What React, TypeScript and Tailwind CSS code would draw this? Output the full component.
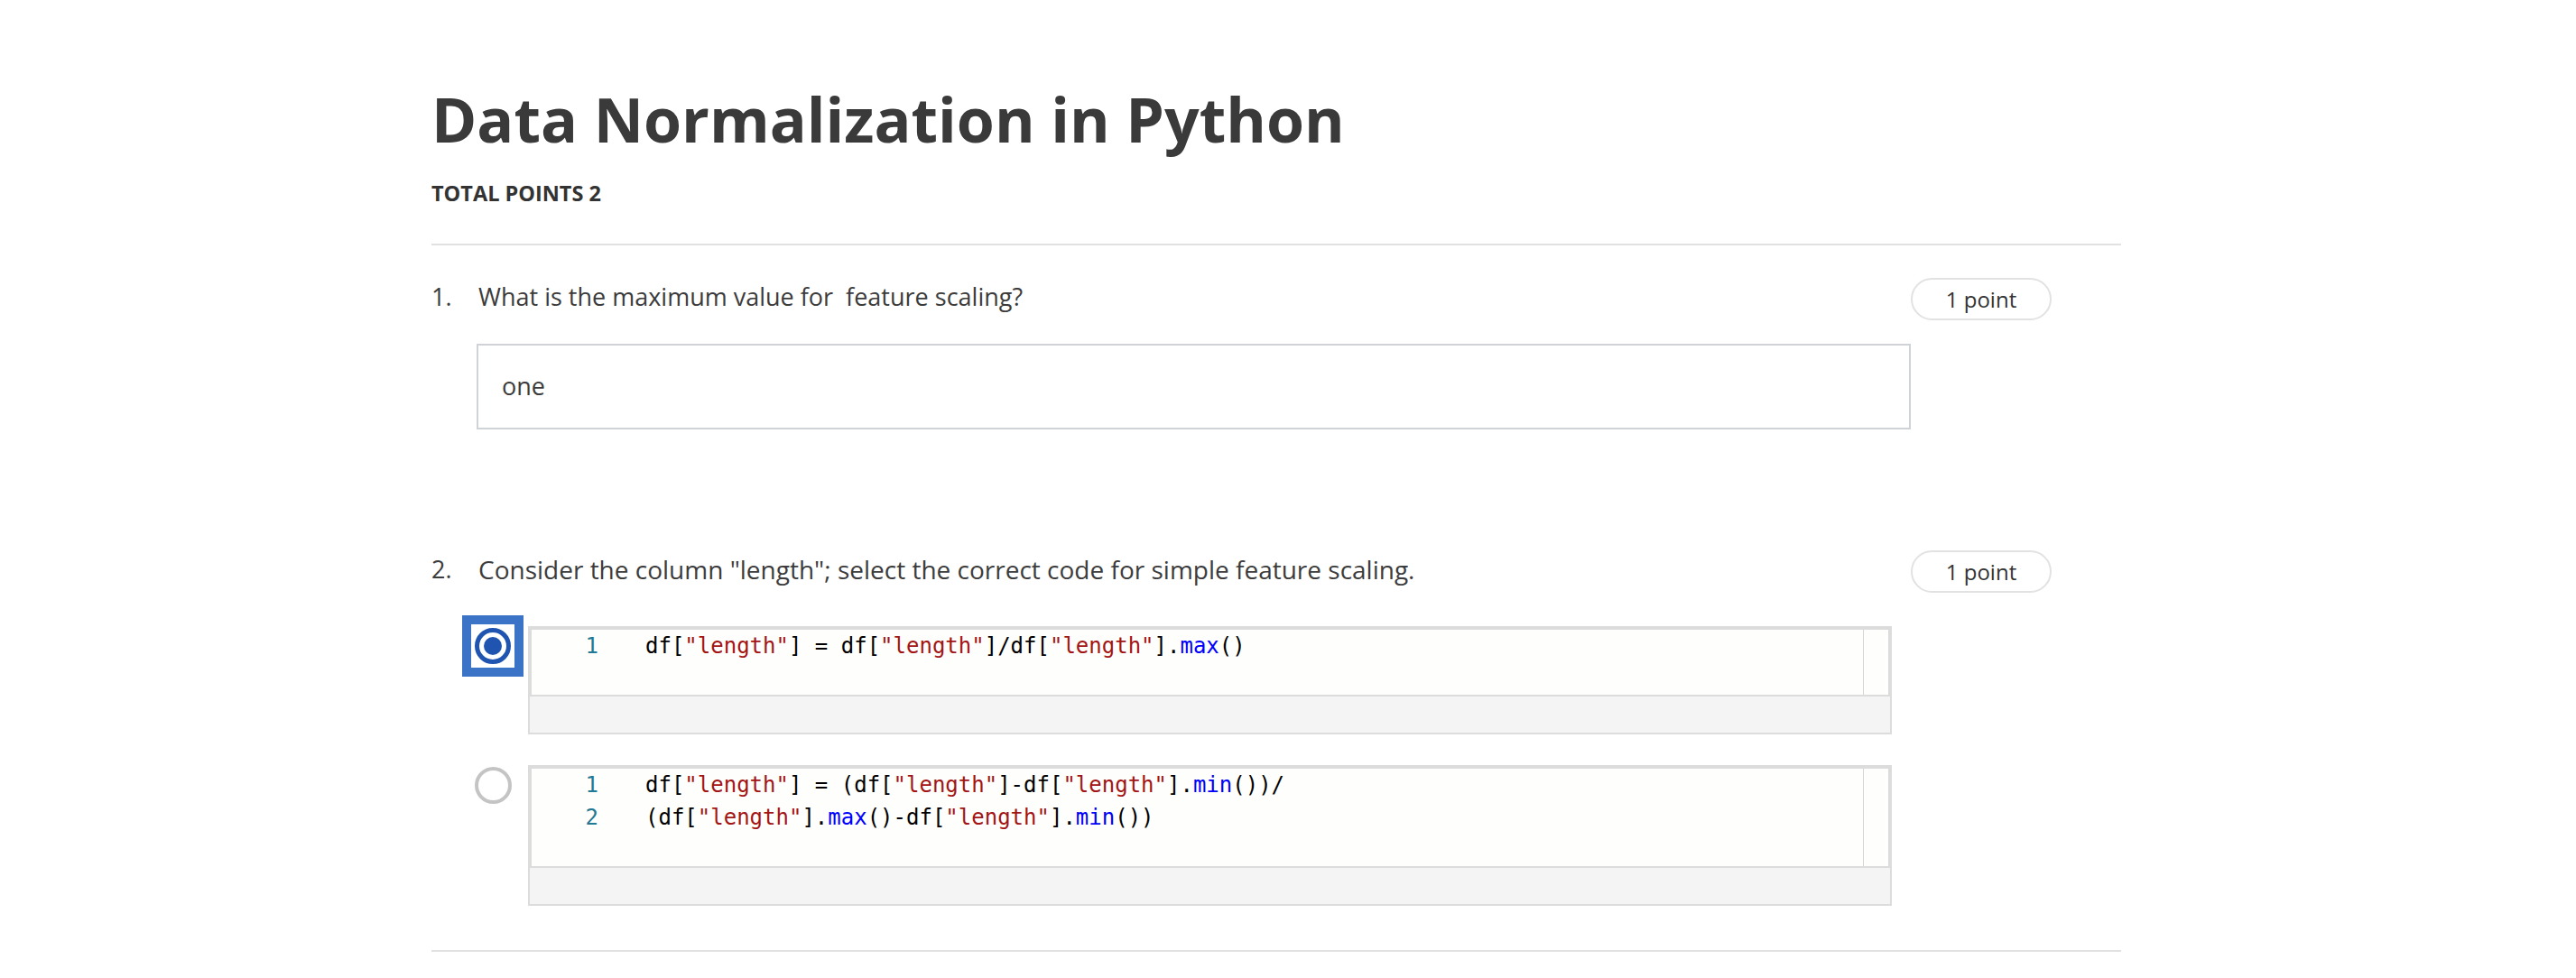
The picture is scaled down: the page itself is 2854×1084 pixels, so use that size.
import React from "react";

type Tok = { t: string; c?: "s" | "b" };

const S = "text-[#a31515]";
const B = "text-[#0000ff]";

const optionA: Tok[][] = [
  [
    { t: "df[" }, { t: '"length"', c: "s" }, { t: "] = df[" }, { t: '"length"', c: "s" },
    { t: "]/df[" }, { t: '"length"', c: "s" }, { t: "]." }, { t: "max", c: "b" }, { t: "()" },
  ],
];

const optionB: Tok[][] = [
  [
    { t: "df[" }, { t: '"length"', c: "s" }, { t: "] = (df[" }, { t: '"length"', c: "s" },
    { t: "]-df[" }, { t: '"length"', c: "s" }, { t: "]." }, { t: "min", c: "b" }, { t: "())/" },
  ],
  [
    { t: "(df[" }, { t: '"length"', c: "s" }, { t: "]." }, { t: "max", c: "b" }, { t: "()-df[" },
    { t: '"length"', c: "s" }, { t: "]." }, { t: "min", c: "b" }, { t: "())" },
  ],
];

const PointPill = () => (
  <div className="flex h-[47px] w-[156px] items-center justify-center rounded-full border-2 border-[#e2e2e2] text-[24px] text-[#333]">
    1 point
  </div>
);

const CodeBox = ({ lines }: { lines: Tok[][] }) => (
  <div className="flex-1 border-2 border-[#dcdcdc]">
    <div className="flex border-2 border-[#dcdcdc] bg-[#fefefc]">
      <div className="flex-1 pb-[36px] font-['DejaVu_Sans_Mono',monospace] text-[24px] leading-[36px]">
        {lines.map((line, i) => (
          <div key={i} className="flex whitespace-pre">
            <span className="w-[74px] text-right text-[#237893]">{i + 1}</span>
            <span className="ml-[52px] text-black">
              {line.map((tok, j) => (
                <span key={j} className={tok.c === "s" ? S : tok.c === "b" ? B : ""}>
                  {tok.t}
                </span>
              ))}
            </span>
          </div>
        ))}
      </div>
      <div className="w-[28px] border-l border-[#d4d4d4]" />
    </div>
    <div className="h-[40px] bg-[#f4f4f4]" />
  </div>
);

const Radio = ({ checked }: { checked?: boolean }) => (
  <div className="-mt-[2px] -ml-[6px] mr-[15px] flex h-[48px] w-[48px] shrink-0 items-center justify-center">
    {checked ? (
      <div className="flex h-[48px] w-[48px] items-center justify-center bg-white outline-[10px] outline-solid outline-[#3b73c6]">
        <div className="flex h-[40px] w-[40px] items-center justify-center rounded-full border-[5px] border-[#1f55b0]">
          <div className="h-[20px] w-[20px] rounded-full bg-[#1f55b0]" />
        </div>
      </div>
    ) : (
      <div className="h-[41px] w-[41px] rounded-full border-[4px] border-[#c4c4c4]" />
    )}
  </div>
);

export default function App() {
  return (
    <div className="min-h-screen bg-white font-['Open_Sans',sans-serif] text-[#3c3c3c]">
      <div className="ml-[478px] w-[1872px] pt-[92px]">
        <h1 className="text-[68px] font-bold leading-[80px] text-[#3a3a3a]">Data Normalization in Python</h1>
        <div className="mt-[28px] text-[23.5px] font-bold leading-[28px] text-[#333]">TOTAL POINTS 2</div>
        <div className="mt-[42px] h-[2px] bg-[#e1e1e1]" />

        <div className="mt-[36px] flex items-start">
          <div className="w-[50px] pt-[1px] text-[27px] leading-[40px]">1.</div>
          <div className="flex-1">
            <div className="pt-[1px] pl-[2px] text-[27px] leading-[40px]">What is the maximum value for&nbsp; feature scaling?</div>
            <div className="mt-[32px] flex h-[95px] items-center border-2 border-[#cfd3d8] pl-[26px] text-[27px]">one</div>
          </div>
          <div className="mr-[77px]">
            <PointPill />
          </div>
        </div>

        <div className="mt-[134px] flex items-start">
          <div className="w-[50px] pt-[1px] text-[27px] leading-[40px]">2.</div>
          <div className="flex-1">
            <div className="pt-[1px] pl-[2px] text-[28px] leading-[40px]">
              Consider the column "length"; select the correct code for simple feature scaling.
            </div>
            <div className="mt-[43px] flex flex-col gap-[34px] pr-[21px]">
              <div className="flex items-start">
                <Radio checked />
                <CodeBox lines={optionA} />
              </div>
              <div className="flex items-start">
                <Radio />
                <CodeBox lines={optionB} />
              </div>
            </div>
          </div>
          <div className="mr-[77px]">
            <PointPill />
          </div>
        </div>

        <div className="mt-[49px] h-[2px] bg-[#e1e1e1]" />
      </div>
    </div>
  );
}
